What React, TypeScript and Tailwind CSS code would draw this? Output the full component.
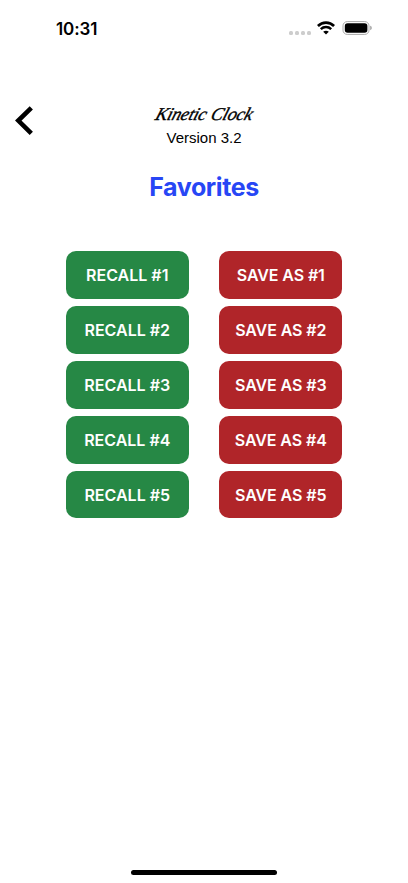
const slots = [1, 2, 3, 4, 5];

function StatusBar() {
  return (
    <div className="flex h-[56px] items-center justify-between pr-[35px] pl-14">
      <span className="mt-px text-[17px] leading-5 font-semibold tracking-[-0.1px]">10:31</span>
      <div className="flex items-center">
        {/* No signal */}
        <div className="mt-[9px] mr-[6px] flex gap-[2px]">
          <span className="size-[4px] rounded-[1.5px] bg-[#cdcdcd]" />
          <span className="size-[4px] rounded-[1.5px] bg-[#cdcdcd]" />
          <span className="size-[4px] rounded-[1.5px] bg-[#cdcdcd]" />
          <span className="size-[4px] rounded-[1.5px] bg-[#cdcdcd]" />
        </div>
        {/* Wifi */}
        <svg className="mr-[7px] h-[14px] w-[18px]" viewBox="0 0 18 14" fill="none" stroke="black">
          <path d="M0.9 5C5.4 0.4 12.6 0.4 17.1 5" strokeWidth="2.7" />
          <path d="M3.8 8.2C6.8 5.4 11.2 5.4 14.2 8.2" strokeWidth="2.5" />
          <path d="M9 13.6L6.2 10.8C7.7 9.3 10.3 9.3 11.8 10.8Z" fill="black" stroke="none" />
        </svg>
        {/* Battery */}
        <svg className="h-[14px] w-[31px]" viewBox="0 0 31 14">
          <rect x="1" y="0.6" width="26" height="12.8" rx="4.2" fill="none" stroke="#a8a8a8" strokeWidth="1" />
          <rect x="2.8" y="2.2" width="22.6" height="9.6" rx="2.8" fill="black" />
          <path d="M28.3 4.8C30.1 5.4 30.1 8.6 28.3 9.2Z" fill="#909090" />
        </svg>
      </div>
    </div>
  );
}

export default function App() {
  return (
    <div className="flex h-[883px] w-[408px] flex-col overflow-hidden bg-white font-['Inter',sans-serif] text-black">
      <StatusBar />

      {/* Header */}
      <header className="mt-[45px] grid h-[49px] grid-cols-[60px_1fr_60px]">
        <button aria-label="Back" className="mt-[4px] ml-[14px] h-[31px] w-[20px]">
          <svg className="h-[31px] w-[20px]" viewBox="0 0 20 31" fill="none" stroke="black" strokeWidth="4.6">
            <path d="M17.3 2.8L4.3 15.6L17.3 28.4" />
          </svg>
        </button>
        <div className="flex flex-col items-center">
          <div className="flex h-[27px] -skew-x-[18deg] gap-[5px] font-['Liberation_Serif',cursive] text-[18px] leading-[26px] font-normal tracking-[-0.2px] whitespace-nowrap italic [-webkit-text-stroke:0.35px_black]">
            <span>Kinetic</span> <span>Clock</span>
          </div>
          <div className="font-['Liberation_Sans',sans-serif] text-[15px] leading-[20px]">Version 3.2</div>
        </div>
      </header>

      <h1 className="mt-[21px] text-center text-[25px] leading-8 font-bold tracking-[-0.4px] text-[#2746f5]">
        Favorites
      </h1>

      {/* Presets */}
      <main className="mx-auto mt-[48.4px] grid grid-cols-[123px_123px] gap-x-[30.5px] gap-y-[7.4px]">
        {slots.map((n) => (
          <div key={n} className="contents">
            <button className="h-[47.5px] rounded-[10px] bg-[#268845] text-[16px] font-semibold text-white">
              RECALL #{n}
            </button>
            <button className="h-[47.5px] rounded-[10px] bg-[#b02529] text-[16px] font-semibold tracking-[-0.1px] text-white">
              SAVE AS #{n}
            </button>
          </div>
        ))}
      </main>

      {/* Home indicator */}
      <div className="mx-auto mt-auto mb-2 h-[5px] w-[146px] rounded-full bg-black" />
    </div>
  );
}
